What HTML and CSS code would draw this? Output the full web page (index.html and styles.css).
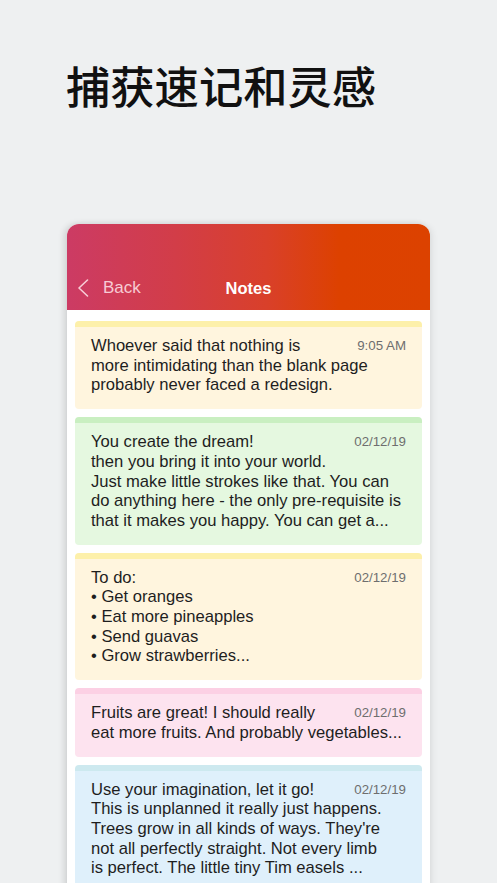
FILE: index.html
```html
<!DOCTYPE html>
<html lang="zh">
<head>
<meta charset="utf-8">
<link rel="stylesheet" href="styles.css">
</head>
<body>
<h1 class="title">捕获速记和灵感</h1>
<div class="phone">
  <div class="header">
    <div class="nav">
      <div class="back">
        <svg class="chev" width="12" height="18" viewBox="0 0 12 18"><path d="M10.5 1 L2 9 L10.5 17" fill="none" stroke="currentColor" stroke-width="1.6" stroke-linecap="round" stroke-linejoin="round"/></svg>
        <span>Back</span>
      </div>
      <div class="nav-title">Notes</div>
    </div>
  </div>
  <div class="list">
    <div class="note yellow">
      <span class="date">9:05 AM</span>
      <p>Whoever said that nothing is<br>more intimidating than the blank page<br>probably never faced a redesign.</p>
    </div>
    <div class="note green">
      <span class="date">02/12/19</span>
      <p>You create the dream!<br>then you bring it into your world.<br>Just make little strokes like that. You can<br>do anything here - the only pre-requisite is<br>that it makes you happy. You can get a...</p>
    </div>
    <div class="note yellow">
      <span class="date">02/12/19</span>
      <p>To do:<br>• Get oranges<br>• Eat more pineapples<br>• Send guavas<br>• Grow strawberries...</p>
    </div>
    <div class="note pink">
      <span class="date">02/12/19</span>
      <p>Fruits are great! I should really<br>eat more fruits. And probably vegetables...</p>
    </div>
    <div class="note blue">
      <span class="date">02/12/19</span>
      <p>Use your imagination, let it go!<br>This is unplanned it really just happens.<br>Trees grow in all kinds of ways. They're<br>not all perfectly straight. Not every limb<br>is perfect. The little tiny Tim easels ...</p>
    </div>
  </div>
</div>
</body>
</html>
```
FILE: styles.css
```css
html, body {
  margin: 0;
  padding: 0;
  height: 100%;
  overflow: hidden;
}
body {
  background: #eef0f1;
  font-family: "Liberation Sans", Arial, sans-serif;
}
.title {
  margin: 60px 0 0 66px;
  font-family: "Noto Sans CJK SC", sans-serif;
  font-weight: 500;
  font-size: 44.3px;
  line-height: 50px;
  color: #111;
  letter-spacing: 0;
}
.phone {
  margin: 114px 0 0 67px;
  width: 363px;
  height: 700px;
  background: #fff;
  border-radius: 12px 12px 0 0;
  overflow: hidden;
  box-shadow: -3px 0 6px rgba(0,0,0,0.12), 3px 0 6px rgba(0,0,0,0.06);
}
.header {
  height: 86px;
  background: linear-gradient(90deg, #cc3b64 0%, #d23d48 30%, #d9402a 55%, #dd4100 75%, #dc4200 100%);
  display: flex;
  align-items: flex-end;
}
.nav {
  position: relative;
  width: 100%;
  height: 30px;
  margin-bottom: 7px;
  display: flex;
  align-items: center;
  justify-content: center;
}
.back {
  position: absolute;
  left: 10px;
  top: 0;
  height: 30px;
  display: flex;
  align-items: center;
  gap: 14px;
  color: rgba(255, 230, 235, 0.85);
  font-size: 17px;
}
.chev { display: block; }
.nav-title {
  color: #fff;
  font-weight: bold;
  font-size: 16.5px;
}
.list {
  padding: 11px 8px;
  display: flex;
  flex-direction: column;
  gap: 8px;
}
.note {
  border-radius: 4px;
  border-top: 6px solid;
  padding: 9px 16px 14px 16px;
  color: #1e1e1e;
}
.note p {
  margin: 0;
  font-size: 16.6px;
  line-height: 19.7px;
  white-space: nowrap;
}
.date {
  float: right;
  font-size: 13.3px;
  line-height: 19.7px;
  color: #6e6e6e;
}
.yellow { background: #fff5de; border-top-color: #fdf0aa; }
.green { background: #e5f8e0; border-top-color: #c9efc1; }
.pink { background: #fde3ef; border-top-color: #fcd0e4; }
.blue { background: #dff0fb; border-top-color: #cde9ef; }
```
